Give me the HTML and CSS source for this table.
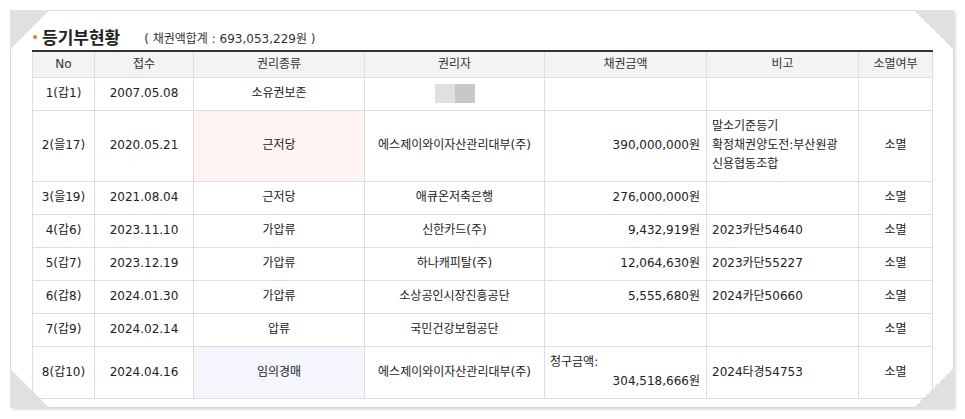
FILE: index.html
```html
<!DOCTYPE html>
<html lang="ko">
<head>
<meta charset="utf-8">
<title>등기부현황</title>
<link rel="stylesheet" href="styles.css">
</head>
<body>
<div class="frame">
  <span class="fold fold-tl"></span>
  <span class="fold fold-tr"></span>
  <span class="fold fold-bl"></span>
  <span class="fold fold-br"></span>
  <div class="title">
    <span class="dot"></span>
    <h2 class="title-text">등기부현황</h2>
    <span class="sum">( 채권액합계 : 693,053,229원 )</span>
  </div>
  <table class="reg">
    <colgroup>
      <col class="c-no"><col class="c-date"><col class="c-kind"><col class="c-owner"><col class="c-amt"><col class="c-note"><col class="c-end">
    </colgroup>
    <thead>
      <tr><th>No</th><th>접수</th><th>권리종류</th><th>권리자</th><th>채권금액</th><th>비고</th><th>소멸여부</th></tr>
    </thead>
    <tbody>
      <tr><td>1(갑1)</td><td>2007.05.08</td><td>소유권보존</td><td><span class="masked"><span class="m1"></span><span class="m2"></span></span></td><td class="amt"></td><td class="note"></td><td></td></tr>
      <tr><td>2(을17)</td><td>2020.05.21</td><td class="pink">근저당</td><td>에스제이와이자산관리대부(주)</td><td class="amt">390,000,000원</td><td class="note">말소기준등기<br>확정채권양도전:부산원광<br>신용협동조합</td><td>소멸</td></tr>
      <tr><td>3(을19)</td><td>2021.08.04</td><td>근저당</td><td>애큐온저축은행</td><td class="amt">276,000,000원</td><td class="note"></td><td>소멸</td></tr>
      <tr><td>4(갑6)</td><td>2023.11.10</td><td>가압류</td><td>신한카드(주)</td><td class="amt">9,432,919원</td><td class="note">2023카단54640</td><td>소멸</td></tr>
      <tr><td>5(갑7)</td><td>2023.12.19</td><td>가압류</td><td>하나캐피탈(주)</td><td class="amt">12,064,630원</td><td class="note">2023카단55227</td><td>소멸</td></tr>
      <tr><td>6(갑8)</td><td>2024.01.30</td><td>가압류</td><td>소상공인시장진흥공단</td><td class="amt">5,555,680원</td><td class="note">2024카단50660</td><td>소멸</td></tr>
      <tr><td>7(갑9)</td><td>2024.02.14</td><td>압류</td><td>국민건강보험공단</td><td class="amt"></td><td class="note"></td><td>소멸</td></tr>
      <tr><td>8(갑10)</td><td>2024.04.16</td><td class="blue">임의경매</td><td>에스제이와이자산관리대부(주)</td><td class="amt"><span class="claim">청구금액:</span>304,518,666원</td><td class="note">2024타경54753</td><td>소멸</td></tr>
    </tbody>
  </table>
</div>
</body>
</html>
```

FILE: styles.css
```css
html, body {
  margin: 0;
  background: #ffffff;
}
body {
  padding: 10px;
  font-family: "DejaVu Sans", "Noto Sans CJK KR", sans-serif;
  font-size: 12px;
  color: #333333;
}
.frame {
  position: relative;
  box-sizing: border-box;
  width: 944px;
  height: 398px;
  padding: 13px 21px 0;
  border: 1px solid #d9d9d9;
  background: #ffffff;
  box-shadow: 2px 2px 2px rgba(0, 0, 0, 0.12);
}
.fold {
  position: absolute;
  width: 40px;
  height: 40px;
}
.fold-tl {
  top: -1px;
  left: -1px;
  background: linear-gradient(135deg, #e0e0e0 50%, transparent 50%);
}
.fold-tr {
  top: -1px;
  right: -1px;
  background: linear-gradient(225deg, #e0e0e0 50%, transparent 50%);
}
.fold-bl {
  bottom: -1px;
  left: -1px;
  background: linear-gradient(45deg, #e0e0e0 50%, transparent 50%);
}
.fold-br {
  bottom: -1px;
  right: -1px;
  background: linear-gradient(315deg, #e0e0e0 50%, transparent 50%);
}
.title {
  display: flex;
  align-items: center;
  height: 26px;
}
.dot {
  width: 4px;
  height: 4px;
  border-radius: 50%;
  background: #f07a1a;
  margin: 0 5px 0 1px;
}
.title-text {
  margin: 0;
  font-family: "Noto Sans CJK KR", sans-serif;
  font-size: 17px;
  font-weight: 700;
  line-height: 26px;
  color: #222222;
}
.sum {
  margin-left: 24px;
  font-size: 12px;
  color: #333333;
}
.reg {
  position: relative;
  width: 900px;
  border-collapse: collapse;
  table-layout: fixed;
}
.c-no { width: 62px; }
.c-date { width: 99px; }
.c-kind { width: 171px; }
.c-owner { width: 180px; }
.c-amt { width: 162px; }
.c-note { width: 152px; }
.c-end { width: 74px; }
.reg th {
  border: 1px solid #dddddd;
  border-top: 2px solid #333333;
  background: #f3f3f3;
  font-weight: 400;
  line-height: 19px;
  padding: 3px 0 3px;
  text-align: center;
  color: #333333;
}
.reg td {
  border: 1px solid #dddddd;
  padding: 6px 5px 7px;
  line-height: 19px;
  text-align: center;
  vertical-align: middle;
  color: #222222;
  white-space: nowrap;
}
.reg td.amt {
  text-align: right;
  padding-right: 6px;
}
.reg td.note {
  text-align: left;
  padding-left: 5px;
}
.reg td.pink {
  background: #fff4f4;
}
.reg td.blue {
  background: #f4f5fd;
}
.claim {
  display: block;
  text-align: left;
}
.masked {
  display: inline-flex;
  vertical-align: middle;
}
.m1, .m2 {
  display: block;
  width: 20px;
  height: 19px;
}
.m1 { background: #e0e0e0; }
.m2 { background: #c8c8c8; }
```
